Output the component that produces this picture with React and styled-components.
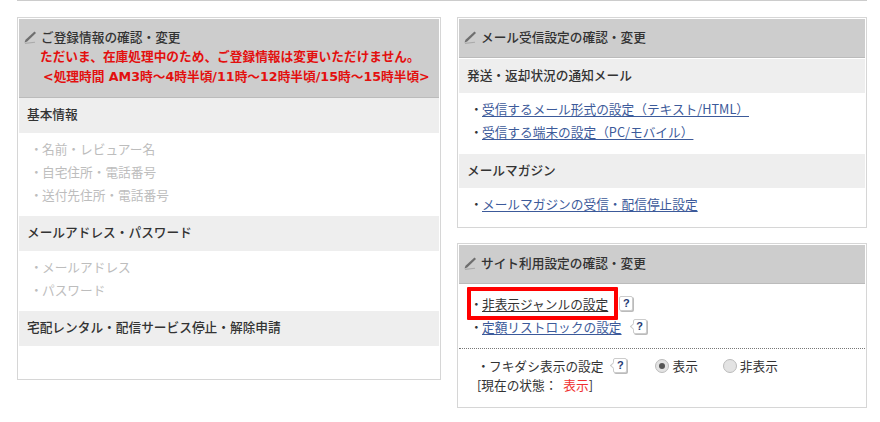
import styled, { createGlobalStyle } from "styled-components"

const GlobalStyle = createGlobalStyle`
    html, body {
        margin: 0;
        background: #fff;
    }
    body {
        font-family: "Noto Sans CJK JP", "Liberation Sans", sans-serif;
        font-size: 12.7px;
        color: #333;
    }
`

const Page = styled.div`
    width: 850px;
    margin-left: 17px;
    height: 422px;
    overflow: hidden;
    border-top: 1px solid #ccc;
`

const Columns = styled.div`
    display: grid;
    grid-template-columns: 424px 410px;
    column-gap: 16px;
    align-items: start;
    margin-top: 16px;
`

const Stack = styled.div`
    display: flex;
    flex-direction: column;
    gap: 15px;
`

const Panel = styled.section`
    border: 1px solid #d6d6d6;
    padding: 1px;
    background: #fff;
    height: ${props => props.height}px;
    box-sizing: border-box;
`

const PanelHead = styled.div`
    background: #cdcdcd;
    border-bottom: 1px solid #bbb;
    padding: ${props => props.padding};
    box-sizing: border-box;
    height: ${props => props.height}px;
`

const HeadTitle = styled.h2`
    display: flex;
    align-items: center;
    gap: 3px;
    margin: 0;
    font-size: 12.7px;
    line-height: 20px;
    font-weight: 500;
    color: #333;
`

const Notice = styled.p`
    margin: 0 0 0 ${props => props.indent}px;
    font-family: "DejaVu Sans", "Noto Sans CJK JP", sans-serif;
    font-size: 12.7px;
    line-height: 19.5px;
    font-weight: 700;
    color: #e3100f;
    white-space: nowrap;
`

const SubHead = styled.h3`
    margin: ${props => props.$gapTop || 0}px 0 0 0;
    background: #eee;
    height: ${props => props.height || 34}px;
    padding-left: 8px;
    font-size: 12.7px;
    line-height: 32px;
    font-weight: 500;
    color: #333;
`

const List = styled.ul`
    list-style: none;
    margin: 0;
    padding: ${props => props.padding};
`

const Item = styled.li`
    display: flex;
    align-items: center;
    height: 23px;
    padding-left: 11px;
    color: ${props => (props.$muted ? "#bdbdbd" : "#333")};
    white-space: nowrap;
`

const Dot = styled.span`
    width: 12px;
`

const TextLink = styled.a`
    color: ${props => props.color || "#3c5a9a"};
    text-decoration: underline;
    text-underline-offset: 2px;
    cursor: pointer;
`

const Highlight = styled.div`
    position: absolute;
    left: 8px;
    top: 3px;
    width: 151px;
    height: 33px;
    border: 4px solid #f00;
    border-radius: 1px;
    box-sizing: border-box;
`

const Relative = styled.div`
    position: relative;
`

const HelpWrap = styled.span`
    display: inline-flex;
    align-items: center;
    margin-left: ${props => props.gap}px;
`

const HelpBadge = styled.span`
    display: inline-block;
    width: 12px;
    height: 13px;
    border: 1px solid #ccc;
    border-radius: 2px;
    box-shadow: 1px 1px 0 #bbb;
    font-family: "Liberation Sans", sans-serif;
    font-size: 11px;
    line-height: 13px;
    font-weight: 700;
    text-align: center;
    color: #1f3a73;
    background: #fff;
`

const Tail = styled.span`
    width: 4px;
    height: 4px;
    border-left: 1px solid #ccc;
    border-bottom: 1px solid #ccc;
    transform: rotate(45deg);
    margin-right: -3px;
    background: #fff;
`

const Divider = styled.hr`
    margin: 0;
    border: 0;
    border-top: 1px dotted #777;
`

const Settings = styled.div`
    padding: 5px 0 0 18px;
`

const SettingRow = styled.div`
    display: flex;
    align-items: center;
    height: 23px;
    white-space: nowrap;
`

const RadioGroup = styled.label`
    display: inline-flex;
    align-items: center;
    gap: 3px;
    margin-left: ${props => props.gap}px;
`

const RadioMark = styled.span`
    width: 12px;
    height: 12px;
    border-radius: 50%;
    border: 1px solid #bbb;
    background: #e3e3e3;
    display: flex;
    align-items: center;
    justify-content: center;
    &::after {
        content: "";
        display: ${props => (props.$checked ? "block" : "none")};
        width: 6px;
        height: 6px;
        border-radius: 50%;
        background: #555;
    }
`

const StatusLine = styled.div`
    line-height: 16px;
    height: 16px;
`

const StatusValue = styled.span`
    color: #f03030;
    margin-left: 3px;
`

const PencilIcon = styled.svg`
    margin-left: 5px;
    flex: none;
`

function Pencil() {
    return (
        <PencilIcon width="14" height="14" viewBox="0 0 14 14">
            <path d="M0.5 12.5 L1.5 9.8 L10.5 1.5 L12 3 L3.2 11.4 Z" fill="#6e6e6e" />
            <path d="M1 13.4 L11 12.2" stroke="#aaa" strokeWidth="1.1" fill="none" />
        </PencilIcon>
    )
}

function Help({ tail, gap }) {
    return (
        <HelpWrap gap={gap}>
            {tail && <Tail />}
            <HelpBadge>?</HelpBadge>
        </HelpWrap>
    )
}

export default function App() {
    return (
        <>
            <GlobalStyle />
            <Page>
                <Columns>
                    <Panel height={363}>
                        <PanelHead height={79} padding="8px 0 0 0">
                            <HeadTitle><Pencil />ご登録情報の確認・変更</HeadTitle>
                            <Notice indent={21}>ただいま、在庫処理中のため、ご登録情報は変更いただけません。</Notice>
                            <Notice indent={24}>&lt;処理時間 AM3時～4時半頃/11時～12時半頃/15時～15時半頃&gt;</Notice>
                        </PanelHead>
                        <SubHead height={35}>基本情報</SubHead>
                        <List padding="4px 0 10px 0">
                            <Item $muted><Dot>・</Dot>名前・レビュアー名</Item>
                            <Item $muted><Dot>・</Dot>自宅住所・電話番号</Item>
                            <Item $muted><Dot>・</Dot>送付先住所・電話番号</Item>
                        </List>
                        <SubHead height={35}>メールアドレス・パスワード</SubHead>
                        <List padding="4px 0 10px 0">
                            <Item $muted><Dot>・</Dot>メールアドレス</Item>
                            <Item $muted><Dot>・</Dot>パスワード</Item>
                        </List>
                        <SubHead height={35}>宅配レンタル・配信サービス停止・解除申請</SubHead>
                    </Panel>
                    <Stack>
                        <Panel height={211}>
                            <PanelHead height={39} padding="8px 0 0 0">
                                <HeadTitle><Pencil />メール受信設定の確認・変更</HeadTitle>
                            </PanelHead>
                            <SubHead $gapTop={1}>発送・返却状況の通知メール</SubHead>
                            <List padding="4px 0 11px 0">
                                <Item><Dot>・</Dot><TextLink>受信するメール形式の設定（テキスト/HTML）</TextLink></Item>
                                <Item><Dot>・</Dot><TextLink>受信する端末の設定（PC/モバイル）</TextLink></Item>
                            </List>
                            <SubHead>メールマガジン</SubHead>
                            <List padding="4px 0 0 0">
                                <Item><Dot>・</Dot><TextLink>メールマガジンの受信・配信停止設定</TextLink></Item>
                            </List>
                        </Panel>
                        <Panel height={165}>
                            <PanelHead height={39} padding="8px 0 0 0">
                                <HeadTitle><Pencil />サイト利用設定の確認・変更</HeadTitle>
                            </PanelHead>
                            <Relative>
                                <List padding="8px 0 10px 0">
                                    <Item><Dot>・</Dot><TextLink color="#333">非表示ジャンルの設定</TextLink><Help gap={11} /></Item>
                                    <Item><Dot>・</Dot><TextLink>定額リストロックの設定</TextLink><Help tail gap={9} /></Item>
                                </List>
                                <Highlight />
                            </Relative>
                            <Divider />
                            <Settings>
                                <SettingRow>
                                    <Dot>・</Dot>フキダシ表示の設定
                                    <Help tail gap={8} />
                                    <RadioGroup gap={28}><RadioMark $checked />表示</RadioGroup>
                                    <RadioGroup gap={25}><RadioMark />非表示</RadioGroup>
                                </SettingRow>
                                <StatusLine>[現在の状態： <StatusValue>表示</StatusValue>]</StatusLine>
                            </Settings>
                        </Panel>
                    </Stack>
                </Columns>
            </Page>
        </>
    )
}
